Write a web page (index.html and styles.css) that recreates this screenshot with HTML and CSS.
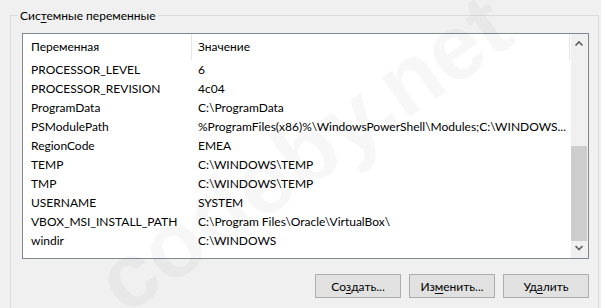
FILE: index.html
```html
<!DOCTYPE html>
<html lang="ru">
<head>
<meta charset="utf-8">
<title>Системные переменные</title>
<link rel="stylesheet" href="styles.css">
</head>
<body>
<div class="group">
  <div class="group-title">Сис<u>т</u>емные переменные</div>
  <div class="listview">
    <div class="lv-body">
      <div class="lv-header">
        <div class="col1 hcell">Переменная</div>
        <div class="col2 hcell">Значение</div>
      </div>
      <div class="row"><div class="col1">PROCESSOR_LEVEL</div><div class="col2">6</div></div>
      <div class="row"><div class="col1">PROCESSOR_REVISION</div><div class="col2">4c04</div></div>
      <div class="row"><div class="col1">ProgramData</div><div class="col2">C:\ProgramData</div></div>
      <div class="row"><div class="col1">PSModulePath</div><div class="col2">%ProgramFiles(x86)%\WindowsPowerShell\Modules;C:\WINDOWS...</div></div>
      <div class="row"><div class="col1">RegionCode</div><div class="col2">EMEA</div></div>
      <div class="row"><div class="col1">TEMP</div><div class="col2">C:\WINDOWS\TEMP</div></div>
      <div class="row"><div class="col1">TMP</div><div class="col2">C:\WINDOWS\TEMP</div></div>
      <div class="row"><div class="col1">USERNAME</div><div class="col2">SYSTEM</div></div>
      <div class="row"><div class="col1">VBOX_MSI_INSTALL_PATH</div><div class="col2">C:\Program Files\Oracle\VirtualBox\</div></div>
      <div class="row"><div class="col1">windir</div><div class="col2">C:\WINDOWS</div></div>
    </div>
    <div class="scrollbar">
      <div class="sb-btn">
        <svg width="17" height="17" viewBox="0 0 17 17"><polyline points="4.5,11.5 8,8 11.5,11.5" fill="none" stroke="#606060" stroke-width="1.7"/></svg>
      </div>
      <div class="sb-track"><div class="sb-thumb"></div></div>
      <div class="sb-btn">
        <svg width="17" height="17" viewBox="0 0 17 17"><polyline points="4.5,5 8,8.5 11.5,5" fill="none" stroke="#606060" stroke-width="1.7"/></svg>
      </div>
    </div>
  </div>
  <div class="buttons">
    <button class="btn">Со<u>з</u>дать...</button>
    <button class="btn">Из<u>м</u>енить...</button>
    <button class="btn">Уд<u>а</u>лить</button>
  </div>
</div>
<div class="watermark">codeby.net</div>
</body>
</html>
```
FILE: styles.css
```css
html, body {
  margin: 0;
  padding: 0;
}
body {
  width: 601px;
  height: 308px;
  overflow: hidden;
  background: #f0f0f0;
  font-family: "Segoe UI", Lato, "Noto Sans", sans-serif;
  font-size: 12px;
  color: #000;
  position: relative;
}
.group {
  margin: 15px 2px 0 10px;
  border: 1px solid #dcdcdc;
  border-bottom: none;
  height: 300px;
  padding: 0 9px 0 11px;
  box-sizing: border-box;
}
.group-title {
  display: table;
  margin: -9px 0 0 -4px;
  padding: 0 2px 0 2px;
  background: #f0f0f0;
  line-height: 17px;
}
.group-title u, .btn u {
  text-decoration-thickness: 1px;
  text-underline-offset: 2px;
}
.listview {
  margin-top: 9px;
  height: 224px;
  border: 1px solid #828790;
  background: #fff;
  display: flex;
}
.lv-body {
  flex: 1;
  min-width: 0;
}
.lv-header {
  display: flex;
  height: 26px;
  align-items: stretch;
}
.lv-header .hcell {
  line-height: 26px;
  border-right: 1px solid #e5e5e5;
  box-sizing: border-box;
}
.row {
  display: flex;
  height: 19px;
  line-height: 19px;
}
.col1 {
  width: 169px;
  padding-left: 8px;
  box-sizing: border-box;
  flex: none;
  white-space: nowrap;
  overflow: hidden;
}
.col2 {
  width: 378px;
  padding-left: 6px;
  box-sizing: border-box;
  flex: none;
  white-space: nowrap;
  overflow: hidden;
}
.scrollbar {
  width: 17px;
  flex: none;
  background: #f0f0f0;
  display: flex;
  flex-direction: column;
}
.sb-btn {
  height: 17px;
  flex: none;
}
.sb-btn svg {
  display: block;
}
.sb-track {
  flex: 1;
  display: flex;
  flex-direction: column;
  justify-content: flex-end;
}
.sb-thumb {
  height: 95px;
  margin: 0 1px 0 0;
  background: #cdcdcd;
}
.buttons {
  display: flex;
  justify-content: flex-end;
  gap: 8px;
  margin-top: 15px;
}
.btn {
  width: 86px;
  height: 24px;
  padding: 0;
  margin: 0;
  background: #e1e1e1;
  border: 1px solid #adadad;
  border-radius: 0;
  font-family: inherit;
  font-size: 12px;
  color: #000;
}
.watermark {
  position: absolute;
  left: 63px;
  top: 103px;
  width: 480px;
  text-align: center;
  font-family: "Liberation Sans", sans-serif;
  font-weight: bold;
  font-size: 92px;
  line-height: 100px;
  color: rgba(0, 0, 0, 0.03);
  transform: rotate(-35deg);
  white-space: nowrap;
  pointer-events: none;
}
```
